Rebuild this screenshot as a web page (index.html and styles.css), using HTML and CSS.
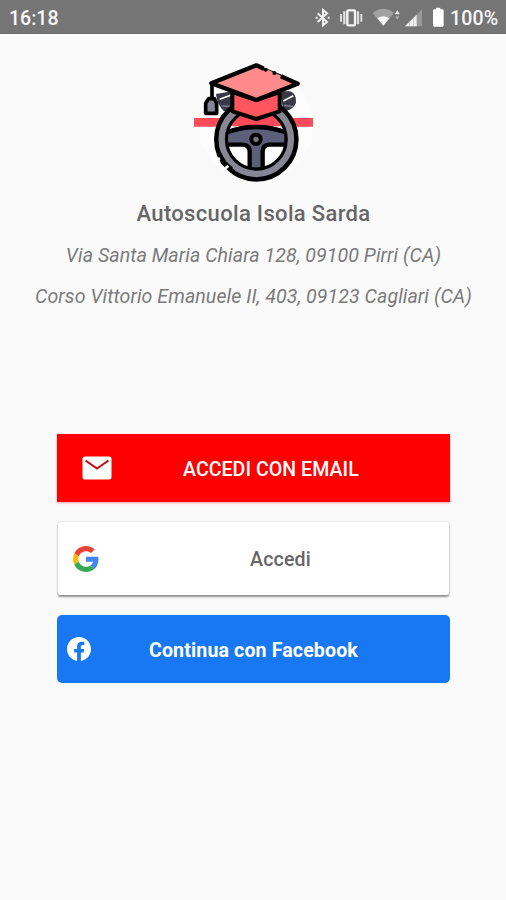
FILE: index.html
```html
<!DOCTYPE html>
<html lang="it">
<head>
<meta charset="utf-8">
<title>Autoscuola Isola Sarda</title>
<link rel="stylesheet" href="styles.css">
</head>
<body>
<header class="status">
  <span class="clock">16:18</span>
  <svg class="status-icons" viewBox="0 0 450 102" aria-hidden="true">
      <path d="M53 40l28 26-12 10V30l12 10-28 26M47 53h6M83 53h6" fill="none" stroke="#f0f0f0" stroke-width="6"/>
      <rect x="142" y="31" width="23" height="45" rx="3" fill="none" stroke="#f4f4f4" stroke-width="7"/>
      <path d="M133 34v39M174 34v39" stroke="#ddd" stroke-width="7"/>
      <path d="M123 42v23M184 42v23" stroke="#ddd" stroke-width="6"/>
      <path d="M218 39Q250 14 282 39L250 77Z" fill="#a2a2a2"/>
      <path d="M232 55Q250 43 268 55L250 77Z" fill="#f7f7f7"/>
      <path d="M285 43l7-13 7 13z" fill="#f4f4f4"/>
      <path d="M286 49l6 11 6-11z" fill="#aaa"/>
      <path d="M315 79L366 28V79Z" fill="#999"/>
      <path d="M315 79L350 44V79Z" fill="#f0f0f0"/>
      <path d="M329 65v14M341 53v26" stroke="#bbb" stroke-width="2"/>
      <path d="M399 32q0-4 4-4h5v-5h13v5h6q4 0 4 4v44q0 4-4 4h-24q-4 0-4-4z" fill="#fff"/>
  </svg>
  <span class="battery">100%</span>
</header>
<main>
  <svg class="logo" viewBox="0 0 450 420" role="img" aria-label="Autoscuola">
    <circle cx="228" cy="225" r="170" fill="#fcfcfc"/>
    <path d="M42 204H399V230H42Z" fill="#fc4b58"/>
    <path d="M108 132L156 124V184H132Q112 165 108 132Z" fill="#383846"/>
    <path d="M300 124H330Q350 130 348 158Q340 180 310 184Z" fill="#383846"/>
    <path d="M119 148l35-13M310 153l30-16" stroke="#fff" stroke-width="5"/>
    <path d="M125 168l24 1M312 166l28 4" stroke="#77778b" stroke-width="5"/>
    <circle cx="229" cy="269" r="91" fill="#fcfcfc"/>
    <path d="M148 229Q172 178 228 178T310 229Z" fill="#fc4b58"/>
    <path d="M137 248Q228 214 320 248V284H269Q248 284 248 305V359H209V305Q209 284 186 284H137Z" fill="#5d5e77" stroke="#000" stroke-width="13" stroke-linejoin="round"/>
    <path d="M150 244Q228 218 308 244" fill="none" stroke="#000" stroke-width="12"/>
    <circle cx="229" cy="268" r="106" fill="none" stroke="#000" stroke-width="42"/>
    <circle cx="229" cy="268" r="104" fill="none" stroke="#868695" stroke-width="19"/>
    <path d="M117 311l14 24M126 333l28 25" stroke="#000" stroke-width="14"/>
    <path d="M107 331l13-6M132 359l13-12" stroke="#fcfcfc" stroke-width="8"/>
    <circle cx="228" cy="268" r="14" fill="#777788" stroke="#000" stroke-width="12"/>
    <path d="M157 126V184L229 207L299 184V126L229 150Z" fill="#ff555e" stroke="#000" stroke-width="12" stroke-linejoin="round"/>
    <path d="M94 100L229 46L353 101L229 150Z" fill="#ff8b8d" stroke="#000" stroke-width="13" stroke-linejoin="round"/>
    <path d="M254 48L307 70" stroke="#fcfcfc" stroke-width="10"/>
    <path d="M251 60L301 82" stroke="#ff8b8d" stroke-width="11"/>
    <circle cx="257" cy="59" r="6"/>
    <circle cx="283" cy="69" r="6"/>
    <path d="M96 99V146" stroke="#000" stroke-width="11"/>
    <path d="M86 146H103L110 160V190H77V160Z" fill="#858494" stroke="#000" stroke-width="11" stroke-linejoin="round"/>
  </svg>
  <h1>Autoscuola Isola Sarda</h1>
  <p class="address">Via Santa Maria Chiara 128, 09100 Pirri (CA)</p>
  <p class="address">Corso Vittorio Emanuele II, 403, 09123 Cagliari (CA)</p>
  <div class="actions">
    <button class="email">
      <svg viewBox="0 0 30 24" aria-hidden="true"><rect x=".5" y=".5" width="29" height="23" rx="2.5" fill="#fff"/><path d="M3.5 4.5L15 12.500 26.500 4.500" fill="none" stroke="#c40808" stroke-width="2"/></svg>
      <span>ACCEDI CON EMAIL</span>
    </button>
    <button class="google">
      <svg viewBox="0 0 48 48" aria-hidden="true"><path fill="#ea4335" d="M24 9.500c3.540 0 6.710 1.220 9.210 3.600l6.850-6.850C35.900 2.380 30.470 0 24 0 14.620 0 6.510 5.380 2.560 13.220l7.980 6.190C12.430 13.720 17.740 9.500 24 9.500z"/><path fill="#4285f4" d="M46.980 24.550c0-1.570-.15-3.090-.38-4.550H24v9.020h12.940c-.58 2.960-2.260 5.480-4.780 7.180l7.730 6c4.510-4.180 7.090-10.360 7.090-17.650z"/><path fill="#fbbc05" d="M10.530 28.590A14.500 14.500 0 0 1 9.770 24c0-1.600.27-3.140.76-4.590l-7.980-6.190A23.900 23.900 0 0 0 0 24c0 3.880.92 7.540 2.560 10.780z"/><path fill="#34a853" d="M24 48c6.480 0 11.930-2.130 15.890-5.810l-7.730-6C30.010 37.640 27.240 38.490 24 38.490c-6.260 0-11.570-4.220-13.470-9.910l-7.980 6.190C6.510 42.620 14.620 48 24 48z"/></svg>
      <span>Accedi</span>
    </button>
    <button class="facebook">
      <svg viewBox="0 0 24 24" aria-hidden="true"><path fill="#fff" d="M24 12.070C24 5.410 18.630 0 12 0S0 5.410 0 12.070c0 6.030 4.390 11.020 10.120 11.930v-8.440H7.080v-3.490h3.040V9.410c0-3.020 1.790-4.690 4.530-4.690 1.310 0 2.690.24 2.690.24v2.970h-1.520c-1.490 0-1.950.93-1.950 1.890v2.250h3.320l-.53 3.490h-2.790V24C19.610 23.090 24 18.100 24 12.070z"/></svg>
      <span>Continua con Facebook</span>
    </button>
  </div>
</main>
</body>
</html>
```
FILE: styles.css
```css
* { box-sizing: border-box; }
body {
  margin: 0;
  height: 900px;
  overflow: hidden;
  background: #fafafa;
  color: #666;
  font-family: Roboto, sans-serif;
}
.status {
  display: flex;
  height: 34px;
  padding: 2px 0 0 9px;
  background: #757575;
  border-bottom: 1px solid #6a6a6a;
  color: #f8f8f8;
  font-size: 19.5px;
  font-weight: 500;
  line-height: 34px;
}
.clock { width: 291px; }
.status-icons { width: 150px; height: 34px; flex: none; margin-top: -2px; }
.battery { white-space: nowrap; letter-spacing: .2px; }
main { display: flex; flex-direction: column; align-items: center; }
.logo { width: 150px; height: 140px; margin: 16px 0 0 4px; }
h1 {
  margin: 8px 0 0 1px;
  font-size: 22px;
  font-weight: 500;
  line-height: 31px;
  letter-spacing: .33px;
  white-space: nowrap;
}
.address {
  margin: 13px 0 0 1px;
  color: #7a7a7a;
  font-size: 19.6px;
  font-style: italic;
  font-weight: 400;
  line-height: 28px;
  letter-spacing: .05px;
  white-space: nowrap;
}
.actions {
  display: flex;
  flex-direction: column;
  width: 393px;
  margin: 123px 0 0 1px;
}
button {
  display: flex;
  align-items: center;
  padding: 0;
  border: 0;
  font-family: inherit;
  font-size: 19.6px;
  font-weight: 500;
  white-space: nowrap;
}
button svg { flex: none; }
button span { padding-top: 2px; }
.email {
  height: 68px;
  padding-left: 25px;
  background: #f00;
  color: #fff;
  box-shadow: 0 1px 2px #ff00005c;
}
.email svg { width: 30px; height: 24px; }
.email span { margin-left: 71px; letter-spacing: .03px; }
.google {
  height: 73px;
  margin: 20px 1px 0;
  padding-left: 15px;
  border-radius: 2px;
  background: #fff;
  color: #666;
  box-shadow: 0 2px 2px #0006, 0 0 2px #0003;
}
.google svg { width: 26px; height: 26px; }
.google span { margin-left: 151px; letter-spacing: .15px; }
.facebook {
  height: 68px;
  margin-top: 20px;
  padding-left: 10px;
  border-radius: 5px;
  background: #1877f2;
  color: #fff;
  font-weight: 700;
}
.facebook svg { width: 24px; height: 24px; }
.facebook span { margin-left: 58px; letter-spacing: .12px; }
```
